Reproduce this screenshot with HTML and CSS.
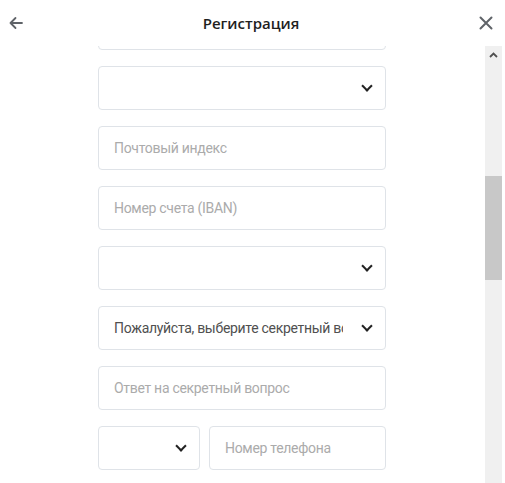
FILE: index.html
```html
<!DOCTYPE html>
<html lang="ru">
<head>
<meta charset="utf-8">
<title>Регистрация</title>
<link rel="stylesheet" href="styles.css">
</head>
<body>
<div class="page">
  <header class="header">
    <button class="icon-btn back" aria-label="Назад">
      <svg width="16" height="16" viewBox="0 0 16 16"><path d="M14 8H2.5M7.5 3L2.5 8l5 5" fill="none" stroke="#5f6368" stroke-width="1.8" stroke-linecap="round" stroke-linejoin="round"/></svg>
    </button>
    <h1 class="title">Регистрация</h1>
    <button class="icon-btn close" aria-label="Закрыть">
      <svg width="14" height="14" viewBox="0 0 14 14"><path d="M1.5 1.5l11 11M12.5 1.5l-11 11" fill="none" stroke="#5f6368" stroke-width="2" stroke-linecap="round"/></svg>
    </button>
  </header>
  <div class="body">
    <div class="viewport">
      <div class="form">
        <div class="field"></div>
        <div class="field select"><span class="value"></span><span class="chev"></span></div>
        <div class="field"><span class="ph">Почтовый индекс</span></div>
        <div class="field"><span class="ph">Номер счета (IBAN)</span></div>
        <div class="field select"><span class="value"></span><span class="chev"></span></div>
        <div class="field select"><span class="value">Пожалуйста, выберите секретный вопрос</span><span class="chev"></span></div>
        <div class="field"><span class="ph">Ответ на секретный вопрос</span></div>
        <div class="row">
          <div class="field select small"><span class="value"></span><span class="chev"></span></div>
          <div class="field grow"><span class="ph">Номер телефона</span></div>
        </div>
      </div>
    </div>
    <div class="scrollbar">
      <div class="sb-btn"><svg width="9" height="6" viewBox="0 0 9 6"><path d="M1 5l3.5-3.5L8 5" fill="none" stroke="#505050" stroke-width="1.8"/></svg></div>
      <div class="sb-gap"></div>
      <div class="sb-thumb"></div>
    </div>
  </div>
</div>
</body>
</html>
```
FILE: styles.css
```css
* { box-sizing: border-box; }
html, body { margin: 0; padding: 0; background: #fff; }
body { font-family: Roboto, "Noto Sans", "Liberation Sans", sans-serif; width: 505px; height: 483px; overflow: hidden; }
.page { width: 505px; height: 483px; display: flex; flex-direction: column; }
.header { height: 46px; flex: none; display: flex; align-items: center; justify-content: space-between; padding: 0 10px 0 7px; }
.icon-btn { background: none; border: 0; padding: 0; width: 18px; height: 18px; display: flex; align-items: center; justify-content: center; }
.title { margin: 0; font-family: "Open Sans", Roboto, sans-serif; font-size: 15px; font-weight: 600; color: #1f1f1f; }
.body { flex: 1; display: flex; min-height: 0; }
.viewport { width: 485px; overflow: hidden; flex: none; padding-top: 1px; }
.form { margin-top: -41px; padding-left: 98px; display: flex; flex-direction: column; gap: 16px; }
.field { width: 288px; height: 44px; border: 1px solid #dfe3e8; border-radius: 4px; display: flex; align-items: center; padding: 0 13px 0 15px; background: #fff; }
.ph { font-family: Roboto, sans-serif; color: #ababab; font-size: 14px; letter-spacing: -0.3px; white-space: nowrap; }
.value { font-family: Roboto, sans-serif; flex: 1; min-width: 0; overflow: hidden; white-space: nowrap; text-overflow: clip; color: #505050; font-size: 14px; letter-spacing: -0.3px; margin-right: 20px; }
.chev { width: 8px; height: 8px; border-right: 2px solid #222; border-bottom: 2px solid #222; transform: rotate(45deg); margin: -5px 1px 0 auto; flex: none; }
.row { display: flex; gap: 9px; width: 288px; }
.small { width: 102px; }
.grow { flex: 1; width: auto; }
.scrollbar { width: 17px; flex: none; background: #f0f0f0; display: flex; flex-direction: column; }
.sb-btn { height: 17px; display: flex; align-items: center; justify-content: center; }
.sb-gap { height: 113px; }
.sb-thumb { height: 104px; background: #c8c8c8; }
```
